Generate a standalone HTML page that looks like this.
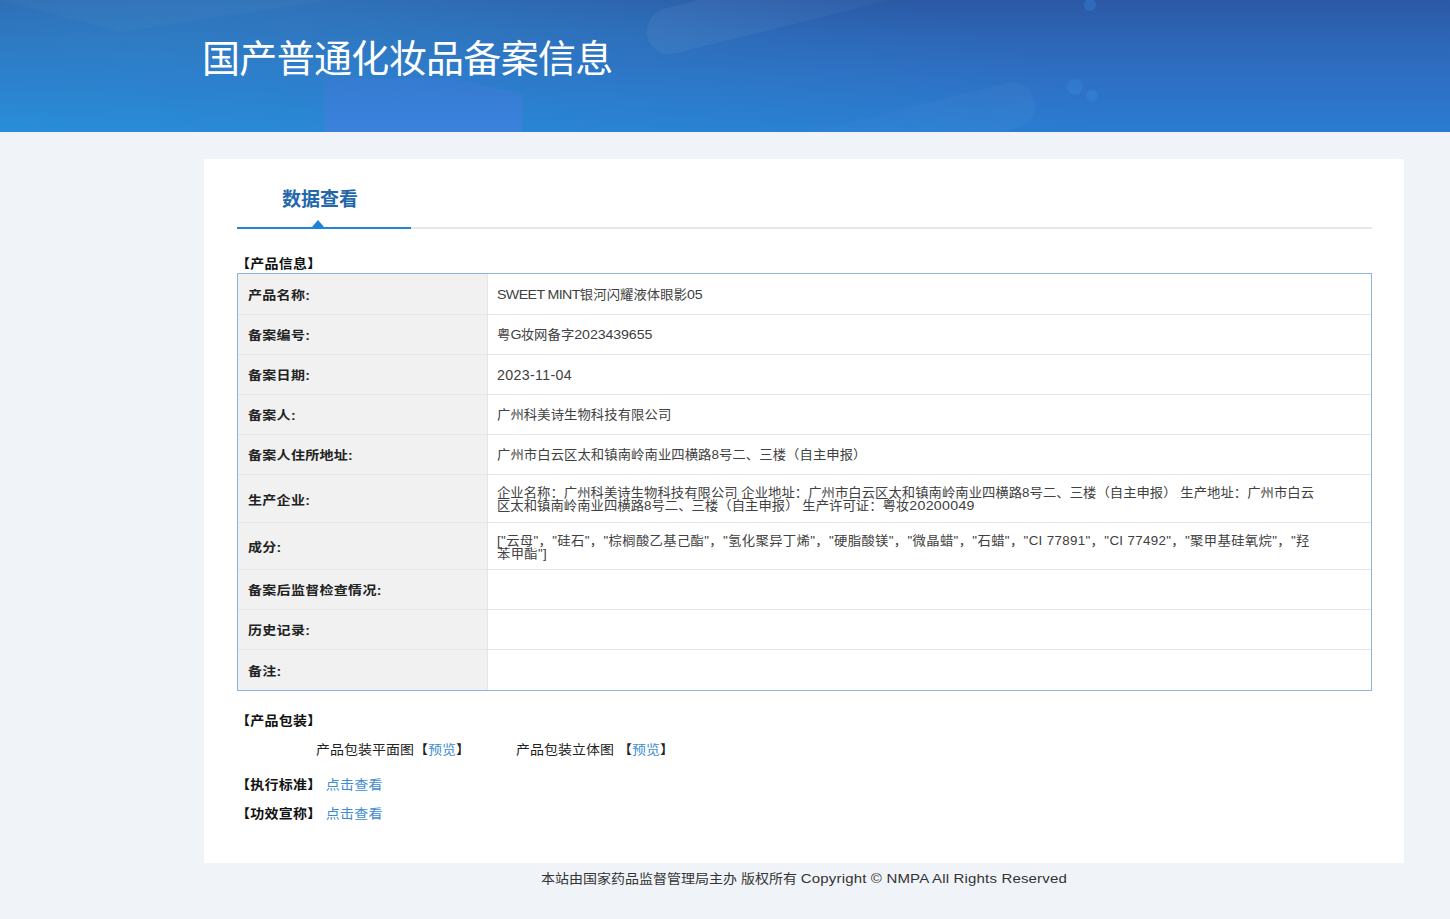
<!DOCTYPE html>
<html lang="zh-CN">
<head>
<meta charset="utf-8">
<title>国产普通化妆品备案信息</title>
<style>
*{box-sizing:border-box;margin:0;padding:0}
html,body{width:1450px;height:919px;overflow:hidden}
body{background:#f0f3f7;font-family:"Liberation Sans","Noto Sans CJK SC",sans-serif;color:#222;position:relative}
.hdr{position:absolute;left:0;top:0;width:1450px;height:132px;overflow:hidden;
 background:radial-gradient(ellipse 640px 90px at 16% 0%,rgba(70,170,230,.2) 0%,rgba(70,170,230,0) 100%),radial-gradient(ellipse 1100px 230px at 0% 100%,rgba(40,170,225,.38) 0%,rgba(40,170,225,0) 100%),linear-gradient(180deg,#2b59a5 0%,#2d66b6 30%,#2e6ec2 55%,#2a7cd2 100%)}
.hdr svg{position:absolute;left:0;top:0}
.hdr h1{position:absolute;left:202px;top:34px;font-size:38px;line-height:50px;font-weight:400;color:#fff;white-space:nowrap;letter-spacing:-.67px}
.card{position:absolute;left:204px;top:159px;width:1200px;height:704px;background:#fff}
.tab{position:absolute;left:282px;top:186px;font-size:19px;line-height:28px;font-weight:700;color:#2467ab;white-space:nowrap}
.ln-g{position:absolute;left:237px;top:227px;width:1135px;height:2px;background:#e6e8eb}
.ln-b{position:absolute;left:237px;top:227px;width:174px;height:2px;background:#2085d8}
.tri{position:absolute;left:312px;top:220px;width:0;height:0;border-left:6.6px solid transparent;border-right:6.6px solid transparent;border-bottom:7px solid #1c83dc}
.sec{position:absolute;font-size:14px;line-height:18px;font-weight:700;color:#111;white-space:nowrap;letter-spacing:.25px;margin-left:-1px}
table{position:absolute;left:238px;top:274px;width:1133px;border-collapse:separate;border-spacing:0;table-layout:fixed}
.tb{position:absolute;left:237px;top:273px;width:1135px;height:418px;border:1px solid #8db3e6;pointer-events:none}
td{border-bottom:1px solid #e6e6e6;font-size:13.33px;line-height:13px;padding:2px 58px 0 9px;vertical-align:middle;color:#404040;height:40px;letter-spacing:.08px}
td.l{width:250px;border-right:1px solid #e6e6e6;background:#f1f1f1;font-weight:700;font-size:14px;color:#222;padding:4px 0 0 10px;letter-spacing:.3px}
tr:first-child td{height:41px}
tr:last-child td{border-bottom:0}
tr.h48 td{height:48px;white-space:nowrap}
tr.h48 td+td{padding-top:3px;letter-spacing:.04px}
tr.h47 td{height:47px;white-space:nowrap}
tr.h47 td+td{letter-spacing:.35px;padding-top:4px}
.p{position:absolute;font-size:14px;line-height:18px;color:#222;white-space:nowrap}
.p a,.sec a{color:#3d8cd2;text-decoration:none;font-weight:400}
.ft{position:absolute;left:541px;top:868px;font-size:14px;line-height:20px;color:#333;white-space:nowrap}
.ft span{font-size:15px;letter-spacing:.17px}
.n{font-size:14.2px;letter-spacing:-.1px}
.s{transform:translateY(-.3px) scaleY(.94);transform-origin:50% 50%}
td.l .s{transform:scaleY(.88)}
tr.h48 .s,tr.h47 .s{line-height:13.83px}
.sec,.p{transform:translateY(-.5px) scaleY(.9);transform-origin:0 50%}
.ft{transform:scaleY(.9);transform-origin:0 50%}
</style>
</head>
<body>
<div class="hdr">
<svg width="1450" height="132" viewBox="0 0 1450 132">
<defs>
<linearGradient id="pg" x1="0" y1="0" x2="0" y2="1"><stop offset="0" stop-color="#3a7ad3" stop-opacity=".7"/><stop offset="1" stop-color="#3a82dc" stop-opacity="1"/></linearGradient>
<linearGradient id="p1" x1="0" y1="0" x2="1" y2="0"><stop offset="0" stop-color="#fff" stop-opacity=".05"/><stop offset=".5" stop-color="#fff" stop-opacity=".03"/><stop offset="1" stop-color="#fff" stop-opacity="0"/></linearGradient>
<linearGradient id="p2" x1="0" y1="0" x2="1" y2="0"><stop offset="0" stop-color="#fff" stop-opacity="0"/><stop offset=".6" stop-color="#fff" stop-opacity=".018"/><stop offset="1" stop-color="#fff" stop-opacity=".03"/></linearGradient>
</defs>
<polygon points="324,78 453,78 522,94 522,132 324,132" fill="url(#pg)"/>
<rect x="647" y="8" width="400" height="46" rx="23" transform="rotate(-14 670 31)" fill="url(#p1)"/>
<rect x="683" y="82" width="352" height="46" rx="23" transform="rotate(-14 1013 105)" fill="url(#p2)"/>
<circle cx="1090" cy="5" r="6" fill="#3a8ae0" opacity=".35"/>
<circle cx="1075" cy="87" r="8" fill="#3a8ae0" opacity=".35"/>
<circle cx="1092" cy="96" r="6" fill="#3a8ae0" opacity=".4"/>
<polygon points="0,0 120,32 330,0" fill="#fff" opacity=".025"/>
</svg>
<h1>国产普通化妆品备案信息</h1>
</div>
<div class="card"></div>
<div class="tab">数据查看</div>
<div class="ln-g"></div><div class="ln-b"></div><div class="tri"></div>
<div class="sec" style="left:237px;top:255px">【产品信息】</div>
<table>
<tr><td class="l"><div class="s">产品名称:</div></td><td><div class="s"><span class="n" style="letter-spacing:-.6px">SWEET MINT</span>银河闪耀液体眼影<span class="n">05</span></div></td></tr>
<tr><td class="l"><div class="s">备案编号:</div></td><td><div class="s">粤<span class="n" style="letter-spacing:-.8px">G</span>妆网备字<span class="n">2023439655</span></div></td></tr>
<tr><td class="l"><div class="s">备案日期:</div></td><td><div class="s" style="transform:none"><span class="n" style="letter-spacing:.35px">2023-11-04</span></div></td></tr>
<tr><td class="l"><div class="s">备案人:</div></td><td><div class="s">广州科美诗生物科技有限公司</div></td></tr>
<tr><td class="l"><div class="s">备案人住所地址:</div></td><td><div class="s">广州市白云区太和镇南岭南业四横路8号二、三楼（自主申报）</div></td></tr>
<tr class="h48"><td class="l"><div class="s">生产企业:</div></td><td><div class="s">企业名称：广州科美诗生物科技有限公司 企业地址：广州市白云区太和镇南岭南业四横路8号二、三楼（自主申报） 生产地址：广州市白云<br>区太和镇南岭南业四横路8号二、三楼（自主申报） 生产许可证：粤妆<span class="n" style="letter-spacing:.3px">20200049</span></div></td></tr>
<tr class="h47"><td class="l"><div class="s">成分:</div></td><td><div class="s">["云母"，"硅石"，"棕榈酸乙基己酯"，"氢化聚异丁烯"，"硬脂酸镁"，"微晶蜡"，"石蜡"，"CI 77891"，"CI 77492"，"聚甲基硅氧烷"，"羟<br>苯甲酯"]</div></td></tr>
<tr><td class="l"><div class="s">备案后监督检查情况:</div></td><td></td></tr>
<tr><td class="l"><div class="s">历史记录:</div></td><td></td></tr>
<tr><td class="l"><div class="s">备注:</div></td><td></td></tr>
</table>
<div class="tb"></div>
<div class="sec" style="left:237px;top:712px">【产品包装】</div>
<div class="p" style="left:316px;top:741px">产品包装平面图【<a>预览</a>】</div>
<div class="p" style="left:516px;top:741px">产品包装立体图 【<a>预览</a>】</div>
<div class="sec" style="left:237px;top:776px">【执行标准】 <a>点击查看</a></div>
<div class="sec" style="left:237px;top:805px">【功效宣称】 <a>点击查看</a></div>
<div class="ft">本站由国家药品监督管理局主办 版权所有 <span>Copyright © NMPA All Rights Reserved</span></div>
</body>
</html>
